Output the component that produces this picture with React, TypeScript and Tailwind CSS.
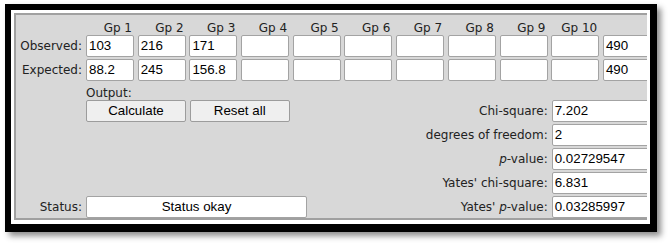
const label = "font-['DejaVu_Sans',Verdana,sans-serif] text-[12px] leading-[14px] text-[#222]";
const field =
  "h-[22px] bg-white border border-[#a3a3a3] rounded-[2px] px-[2px] flex items-center font-['Liberation_Sans',Arial,sans-serif] text-[13.33px] text-black whitespace-nowrap overflow-hidden";
const button =
  "h-[22px] w-[100px] bg-[#efefef] border border-[#9c9c9c] rounded-[2px] flex items-center justify-center font-['Liberation_Sans',Arial,sans-serif] text-[13.33px] text-black";

const groups = ["Gp 1", "Gp 2", "Gp 3", "Gp 4", "Gp 5", "Gp 6", "Gp 7", "Gp 8", "Gp 9", "Gp 10"];
const observed = ["103", "216", "171", "", "", "", "", "", "", ""];
const expected = ["88.2", "245", "156.8", "", "", "", "", "", "", ""];

function DataRow({ name, values, total }: { name: string; values: string[]; total: string }) {
  return (
    <div className="flex items-center h-[22px]">
      <div className={`${label} w-[70px] text-right pr-[4px]`}>{name}</div>
      <div className="flex gap-[3.7px]">
        {values.map((v, i) => (
          <div key={i} className={`${field} w-[48px]`}>
            {v}
          </div>
        ))}
        <div className={`${field} w-[60px]`}>{total}</div>
      </div>
    </div>
  );
}

function ResultRow({ name, value, left }: { name: React.ReactNode; value: string; left?: React.ReactNode }) {
  return (
    <div className="flex items-center h-[22px]">
      <div className="w-[70px] flex justify-end pr-[4px]">{left && typeof left === "string" ? <span className={label}>{left}</span> : null}</div>
      <div className="w-[465.7px] flex items-center">
        <div className="flex-1 flex items-center">{left && typeof left !== "string" ? left : null}</div>
        <div className={`${label} text-right pr-[4px] whitespace-nowrap`}>{name}</div>
      </div>
      <div className={`${field} w-[130px]`}>{value}</div>
    </div>
  );
}

export default function App() {
  return (
    <div className="w-[669px] h-[246px] bg-white pt-[4px] pl-[5px]">
      {/* screenshot frame */}
      <div className="w-[652px] h-[228px] bg-white border-black border-t-[6px] border-l-[6px] border-r-[7px] border-b-[8px] pt-[3px] pl-[3px] shadow-[4px_4px_6px_rgba(0,0,0,0.45)]">
        <div className="w-[633px] overflow-hidden">
          <div className="w-[720px] h-[207px] bg-[#d8d8d8] border-2 border-[#a0a0a0]">
            {/* header */}
            <div className="flex items-end h-[20px]">
              <div className="w-[70px]" />
              <div className="flex gap-[3.7px]">
                {groups.map((g) => (
                  <div key={g} className={`${label} w-[48px] text-right pr-[2px]`}>
                    {g}
                  </div>
                ))}
              </div>
            </div>

            <div className="flex flex-col gap-[2px]">
              <DataRow name="Observed:" values={observed} total="490" />
              <DataRow name="Expected:" values={expected} total="490" />
            </div>

            <div className="flex items-end h-[19px]">
              <div className="w-[70px]" />
              <div className={label}>Output:</div>
            </div>

            <div className="flex flex-col gap-[2px]">
              <ResultRow
                name="Chi-square:"
                value="7.202"
                left={
                  <div className="flex gap-[3.7px]">
                    <button className={button}>Calculate</button>
                    <button className={button}>Reset all</button>
                  </div>
                }
              />
              <ResultRow name="degrees of freedom:" value="2" />
              <ResultRow
                name={
                  <>
                    <i>p</i>-value:
                  </>
                }
                value="0.02729547"
              />
              <ResultRow name="Yates' chi-square:" value="6.831" />
              <div className="flex items-center h-[22px]">
                <div className={`${label} w-[70px] text-right pr-[4px]`}>Status:</div>
                <div className="w-[465.7px] flex items-center">
                  <div className="flex-1">
                    <div className={`${field} w-[221px] justify-center`}>Status okay</div>
                  </div>
                  <div className={`${label} text-right pr-[4px] whitespace-nowrap`}>
                    Yates' <i>p</i>-value:
                  </div>
                </div>
                <div className={`${field} w-[130px]`}>0.03285997</div>
              </div>
            </div>
          </div>
        </div>
      </div>
    </div>
  );
}
